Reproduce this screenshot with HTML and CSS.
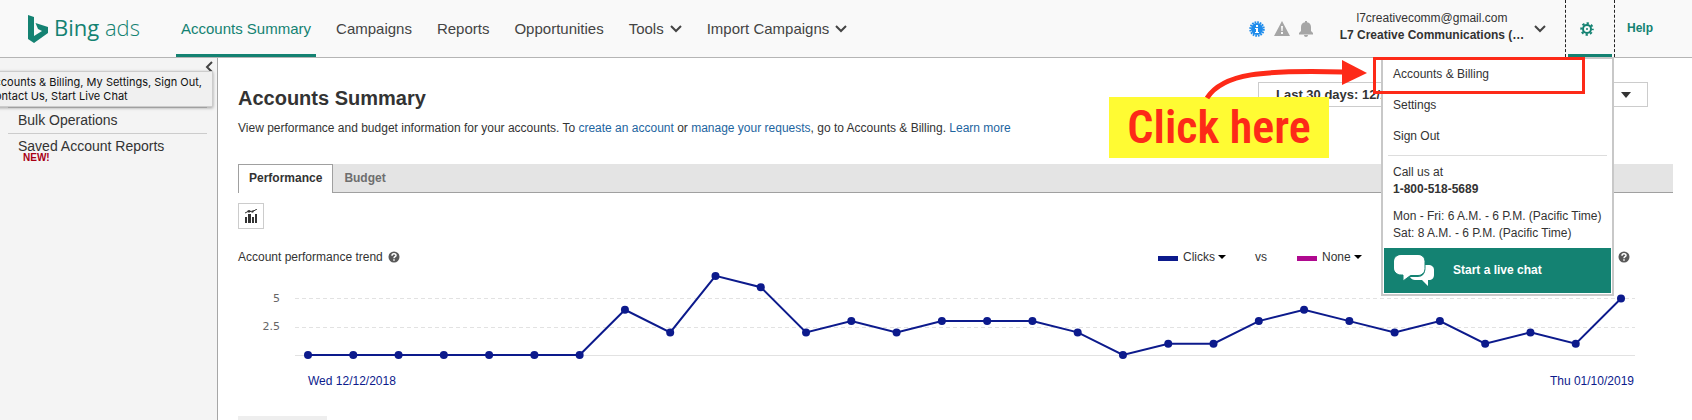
FILE: index.html
```html
<!DOCTYPE html>
<html lang="en">
<head>
    <meta charset="UTF-8">
    <meta name="viewport" content="width=device-width, initial-scale=1.0">
    <title>Accounts Summary - Bing ads</title>
    <link rel="stylesheet" href="styles.css">
</head>
<body>
    <header class="header">
        <a class="logo" href="#">
            <svg width="20" height="28" viewBox="0 0 20 28">
                <path fill="#148272" d="M0 0l6 2v19l8-5-4-2-2.500-6L20 12v6L6 28l-6-4z"/>
            </svg>
            <span class="logo-text">Bing <span class="logo-ads">ads</span></span>
        </a>
        <nav class="nav">
            <a class="nav-item active" href="#">Accounts Summary</a>
            <a class="nav-item" href="#">Campaigns</a>
            <a class="nav-item" href="#">Reports</a>
            <a class="nav-item" href="#">Opportunities</a>
            <a class="nav-item" href="#">Tools
                <svg class="chevron" width="12" height="8" viewBox="0 0 12 8"><path d="M1 1l5 5 5-5"/></svg>
            </a>
            <a class="nav-item" href="#">Import Campaigns
                <svg class="chevron" width="12" height="8" viewBox="0 0 12 8"><path d="M1 1l5 5 5-5"/></svg>
            </a>
        </nav>
        <div class="alerts">
            <svg width="16" height="16" viewBox="0 0 16 16">
                <circle cx="8" cy="8" r="6" fill="#1f8ceb"/>
                <circle cx="8" cy="8" r="6.750" fill="none" stroke="#1f8ceb" stroke-width="2" stroke-dasharray="1.700 .95"/>
                <path fill="#fff" d="M7 4h2v2H7zM6 7h3v4h1v1H6v-1h1V8H6z"/>
            </svg>
            <svg width="16" height="15" viewBox="0 0 16 15">
                <path fill="#a6a6a6" d="M8 0l8 15H0z"/>
                <path fill="#f9f9f9" d="M7 5h2l-.4 5H7.400zM7 11h2v2H7z"/>
            </svg>
            <svg width="14" height="16" viewBox="0 0 14 16">
                <path fill="#a6a6a6" d="M6 0h2v1.200c2.500.4 4 2.300 4 4.800v4l2 2v1.500H0V12l2-2V6c0-2.500 1.500-4.400 4-4.800zM5 14h4c0 1.200-.8 2-2 2s-2-.8-2-2z"/>
            </svg>
        </div>
        <button class="account" type="button">
            <span class="account-text">
                <span>l7creativecomm@gmail.com</span>
                <strong>L7 Creative Communications (…</strong>
            </span>
            <svg class="chevron" width="12" height="8" viewBox="0 0 12 8"><path d="M1 1l5 5 5-5"/></svg>
        </button>
        <div class="settings">
            <button class="settings-toggle" type="button" aria-label="Settings">
                <svg width="14" height="14" viewBox="0 0 14 14" fill="none" stroke="#148272">
                    <circle cx="7" cy="7" r="4" stroke-width="2"/>
                    <circle cx="7" cy="7" r="5.750" stroke-width="2" stroke-dasharray="2.300 2.216" stroke-dashoffset="1.100"/>
                    <circle cx="7" cy="7" r="1" fill="#148272" stroke="none"/>
                </svg>
            </button>
            <div class="menu">
                <a class="menu-item" href="#">Accounts &amp; Billing</a>
                <a class="menu-item" href="#">Settings</a>
                <a class="menu-item" href="#">Sign Out</a>
                <div class="menu-info">
                    <p>Call us at<br><strong>1-800-518-5689</strong></p>
                    <p>Mon - Fri: 6 A.M. - 6 P.M. (Pacific Time)<br>Sat: 8 A.M. - 6 P.M. (Pacific Time)</p>
                </div>
                <button class="chat" type="button">
                    <svg width="41" height="31" viewBox="0 0 41 31" fill="#fff">
                        <path d="M31 10h3c4 0 6 2 6 5v5c0 3-2 5-5 5h-1v6l-6-6h-7c-2 0-4-1-5-3h8c4 0 7-3 7-7z"/>
                        <path stroke="#148272" d="M7-.5h17c4 0 7 3 7 7v7c0 4-3 7-7 7h-7.500L9 26v-6H7c-4 0-7.500-3-7.500-7V6.500c0-4 3.500-7 7.500-7z"/>
                    </svg>
                    Start a live chat
                </button>
            </div>
        </div>
        <a class="help" href="#">Help</a>
    </header>

    <div class="page">
        <aside class="sidebar">
            <button class="collapse" type="button" aria-label="Collapse">
                <svg class="chevron" width="8" height="12" viewBox="0 0 8 12"><path d="M7 1L2 6l5 5"/></svg>
            </button>
            <ul class="side-list">
                <li><a href="#">Bulk Operations</a></li>
                <li><a href="#">Saved Account Reports</a><span class="new">NEW!</span></li>
            </ul>
            <div class="tooltip">Accounts &amp; Billing, My Settings, Sign Out,<br>Contact Us, Start Live Chat</div>
        </aside>

        <main class="main">
            <div class="title-row">
                <h1>Accounts Summary</h1>
                <button class="date-range" type="button">
                    <span>Last 30 days: 12/12/2018 - 1/10/2019</span>
                    <svg width="10" height="6" viewBox="0 0 10 6"><path fill="#333" d="M0 0h10L5 6z"/></svg>
                </button>
            </div>
            <p class="intro">View performance and budget information for your accounts. To <a href="#">create an account</a> or <a href="#">manage your requests</a>, go to Accounts &amp; Billing. <a href="#">Learn more</a></p>

            <div class="tabs" role="tablist">
                <button class="tab selected" type="button" role="tab" aria-selected="true">Performance</button>
                <button class="tab" type="button" role="tab" aria-selected="false">Budget</button>
            </div>

            <button class="chart-toggle" type="button" aria-label="Show chart">
                <svg width="13" height="14" viewBox="0 0 13 14">
                    <path fill="#333" d="M0 8h2v6H0zM3 5h3v9H3zM7 8h2v6H7zM10 5h2v9h-2z"/>
                    <path fill="none" stroke="#333" d="M0 4l4-2 3 1 5-3"/>
                    <path fill="#333" d="M2 2l2-1 2 1-2 2zM6 2l2 2 1-3z"/>
                </svg>
            </button>

            <div class="trend-row">
                <span>Account performance trend</span>
                <svg class="help-icon" width="12" height="12" viewBox="0 0 12 12">
                    <circle cx="6" cy="6" r="5.500" fill="#595959"/>
                    <path fill="none" stroke="#fff" stroke-width="1.500" d="M4 4.800c0-2.600 4-2.600 4-.3C8 5.800 6 5.600 6 7.300M6 8.300v1.400"/>
                </svg>
                <div class="legend">
                    <span class="swatch clicks"></span>
                    <select aria-label="First metric"><option>Clicks</option></select>
                    <svg width="8" height="4" viewBox="0 0 8 4"><path d="M0 0h8L4 4z"/></svg>
                    <span class="vs">vs</span>
                    <span class="swatch none"></span>
                    <select aria-label="Second metric"><option>None</option></select>
                    <svg width="8" height="4" viewBox="0 0 8 4"><path d="M0 0h8L4 4z"/></svg>
                </div>
                <svg width="12" height="12" viewBox="0 0 12 12">
                    <circle cx="6" cy="6" r="5.500" fill="#595959"/>
                    <path fill="none" stroke="#fff" stroke-width="1.500" d="M4 4.800c0-2.600 4-2.600 4-.3C8 5.800 6 5.600 6 7.300M6 8.300v1.400"/>
                </svg>
            </div>

            <div class="chart">
                <div class="axis"><span>5</span><span>2.5</span></div>
                <svg class="plot" id="plot" viewBox="0 0 1340 98">
                    <path class="grid" d="M0 31.500h1340M0 60.500h1340"/>
                    <path class="base" d="M0 88.500h1340"/>
                </svg>
            </div>
            <div class="dates"><span>Wed 12/12/2018</span><span>Thu 01/10/2019</span></div>
            <div class="toolbar"></div>
        </main>
    </div>

    <div class="callout">Click here</div>
    <svg class="arrow" width="164" height="42" viewBox="0 0 164 42">
        <path fill="none" stroke="#fd2a18" stroke-width="5" d="M4 40C20 15 60 12 140 14"/>
        <path fill="#fd2a18" d="M139 2l25 13-25 12z"/>
    </svg>
    <div class="highlight"></div>

    <script src="chart.js"></script>
</body>
</html>
```

FILE: styles.css
```css
:root {
    --teal: #148272;
    --text: #333;
    --navy: #0c1a8c;
    --red: #fd2a18;
}
* {
    box-sizing: border-box;
}
body {
    margin: 0;
    height: 100vh;
    overflow: hidden;
    position: relative;
    display: flex;
    flex-direction: column;
    font-family: "Liberation Sans", Arial, sans-serif;
    font-size: 12px;
    line-height: 17px;
    color: var(--text);
    background: #fff;
}
a {
    color: inherit;
    text-decoration: none;
}
button, select {
    font: inherit;
    color: inherit;
    padding: 0;
    border: none;
    background: none;
    cursor: pointer;
}
svg {
    display: block;
    flex: none;
}
.chevron {
    fill: none;
    stroke: #444;
    stroke-width: 2;
}

/* header */
.header {
    display: flex;
    align-items: center;
    flex: none;
    height: 58px;
    padding: 0 39px 0 28px;
    background: #f9f9f9;
    border-bottom: 1px solid #b5b5b5;
}
.logo {
    display: flex;
    align-items: center;
    gap: 6px;
    width: 148px;
    color: var(--teal);
}
.logo-text {
    padding-bottom: 3px;
    font-family: "Open Sans", sans-serif;
    font-size: 22px;
    line-height: 28px;
    white-space: nowrap;
}
.logo-ads {
    font-weight: 300;
}
.nav {
    display: flex;
    align-self: stretch;
    gap: 15px;
    font-size: 15px;
    color: #444;
    white-space: nowrap;
}
.nav-item {
    display: flex;
    align-items: center;
    gap: 6px;
    padding: 0 5px;
    border-top: 3px solid transparent;
    border-bottom: 3px solid transparent;
}
.nav-item.active {
    color: var(--teal);
    border-bottom-color: var(--teal);
}
.alerts {
    display: flex;
    align-items: center;
    gap: 9px;
    margin-left: auto;
}
.account {
    display: flex;
    align-items: center;
    gap: 10px;
    margin: 0 19px 0 27px;
    white-space: nowrap;
}
.account-text {
    display: flex;
    flex-direction: column;
    align-items: center;
    width: 184px;
    padding-top: 3px;
    padding-bottom: 7px;
}
.settings {
    position: relative;
    align-self: stretch;
    width: 50px;
    padding: 0 2px;
    border: dashed #222;
    border-width: 0 1px;
}
.settings-toggle {
    display: flex;
    align-items: center;
    justify-content: center;
    width: 100%;
    height: 100%;
    padding-right: 6px;
    border-top: 3px solid transparent;
    border-bottom: 3px solid var(--teal);
}
.help {
    margin-left: 12px;
    font-weight: bold;
    color: var(--teal);
}

/* settings menu */
.menu {
    position: absolute;
    top: 57px;
    right: 0;
    z-index: 5;
    width: 233px;
    padding: 0 1px 1px;
    background: #fff;
    border: 2px solid #c8c8c8;
}
.menu-item {
    display: block;
    padding: 0 9px;
    line-height: 31px;
}
.menu-info {
    margin: 3px 4px 0;
    padding: 8px 5px 6px;
    border-top: 1px solid #ddd;
    white-space: nowrap;
}
.menu-info p {
    margin: 0 0 10px;
}
.menu-info p:last-child {
    margin: 0;
}
.chat {
    display: flex;
    align-items: center;
    gap: 18px;
    width: 100%;
    height: 45px;
    padding: 0 10px;
    font-weight: bold;
    color: #fff;
    background: var(--teal);
}

/* left pane */
.page {
    display: flex;
    flex: 1;
    min-height: 0;
}
.sidebar {
    position: relative;
    flex: none;
    width: 218px;
    padding: 3px 10px 0 8px;
    background: #f4f4f4;
    border-right: 1px solid #a6a6a6;
}
.collapse {
    display: block;
    margin: 0 -6px 0 auto;
}
.side-list {
    margin: 34px 0 0;
    padding: 0;
    list-style: none;
}
.side-list li {
    padding: 3px 10px 4px;
    font-size: 14px;
    line-height: 18px;
    border-top: 1px solid #ccc;
}
.new {
    display: block;
    margin: -2px 0 0 5px;
    font-size: 10px;
    line-height: 10px;
    font-weight: bold;
    color: #a80014;
}
.tooltip {
    position: absolute;
    top: 13px;
    right: 4px;
    padding: 3px 10px;
    font-family: Inter, sans-serif;
    font-size: 11px;
    line-height: 14px;
    white-space: nowrap;
    color: #111;
    background: #f0f0f0;
    border: 1px solid #ccc;
    box-shadow: 0 1px 3px rgba(0, 0, 0, 0.35);
}

/* content */
.main {
    flex: 1;
    min-width: 0;
    padding: 24px 19px 0 20px;
}
.title-row {
    display: flex;
    align-items: flex-start;
    justify-content: space-between;
    padding-right: 25px;
}
h1 {
    margin: 4px 0 0;
    font-size: 20px;
    line-height: 24px;
}
.date-range {
    display: flex;
    align-items: center;
    justify-content: space-between;
    width: 390px;
    height: 25px;
    padding: 0 16px 0 17px;
    font-size: 13px;
    font-weight: bold;
    border: 1px solid #ccc;
}
.intro {
    margin: 10px 0 28px;
    line-height: 16px;
}
.intro a {
    color: #1d65a0;
}
.tabs {
    display: flex;
    height: 29px;
    background: #e4e4e4;
    box-shadow: inset 0 -1px #a0a0a0;
}
.tab {
    padding: 0 11px;
    font-weight: bold;
    color: #6e6e6e;
}
.tab.selected {
    padding: 0 10px 1px;
    color: var(--text);
    background: #fff;
    border: 1px solid #a0a0a0;
    border-bottom: none;
}
.chart-toggle {
    display: flex;
    align-items: center;
    justify-content: center;
    width: 26px;
    height: 26px;
    margin: 10px 0 18px;
    border: 1px solid #ccc;
}
.trend-row {
    display: flex;
    align-items: center;
    height: 20px;
    padding-right: 43px;
}
.help-icon {
    margin-left: 5px;
}
.legend {
    display: flex;
    align-items: center;
    margin: 0 256px 0 auto;
}
.legend select {
    appearance: none;
    margin: 0 3px 0 5px;
}
.swatch {
    width: 20px;
    height: 5px;
    margin-top: 3px;
}
.swatch.clicks {
    background: var(--navy);
}
.swatch.none {
    background: #b0098f;
}
.vs {
    margin: 0 30px 0 29px;
}
.chart {
    display: flex;
    padding-right: 38px;
}
.axis {
    display: flex;
    flex-direction: column;
    flex: none;
    width: 57px;
    padding: 18px 15px 0 0;
    font-family: "DejaVu Sans", sans-serif;
    font-size: 11px;
    line-height: 28px;
    text-align: right;
    color: #666;
}
.plot {
    flex: 1;
    min-width: 0;
}
.grid, .base {
    fill: none;
    stroke: #e2e2e2;
}
.grid {
    stroke-dasharray: 4 3;
}
.series {
    fill: none;
    stroke: var(--navy);
    stroke-width: 2;
}
.point {
    fill: var(--navy);
}
.dates {
    display: flex;
    justify-content: space-between;
    padding: 8px 39px 0 70px;
    line-height: 17px;
    color: var(--navy);
}
.toolbar {
    width: 89px;
    height: 24px;
    margin-top: 26px;
    background: #eee;
}

/* annotation */
.callout {
    position: absolute;
    top: 97px;
    right: 363px;
    z-index: 6;
    width: 220px;
    font-family: "Roboto Condensed", Roboto, "Liberation Sans", sans-serif;
    font-size: 46px;
    font-weight: 600;
    line-height: 61px;
    text-align: center;
    color: var(--red);
    background: #fffb33;
}
.arrow {
    position: absolute;
    top: 58px;
    right: 325px;
    z-index: 7;
}
.highlight {
    position: absolute;
    top: 57px;
    right: 107px;
    z-index: 7;
    width: 212px;
    height: 37px;
    border: 3px solid var(--red);
    pointer-events: none;
}
```

FILE: chart.js
```js
const clicks = [0, 0, 0, 0, 0, 0, 0, 4, 2, 7, 6, 2, 3, 2, 3, 3, 3, 2, 0, 1, 1, 3, 4, 3, 2, 3, 1, 2, 1, 5];
const plot = document.getElementById('plot');

function addShape(name, attrs) {
    const shape = document.createElementNS('http://www.w3.org/2000/svg', name);
    for (const key in attrs) shape.setAttribute(key, attrs[key]);
    plot.appendChild(shape);
}

// first day at 13, last day at 1326, one click is 11.3 units high
const points = clicks.map((value, i) => [
    13 + i * 1313 / (clicks.length - 1),
    88 - value * 11.3
]);

addShape('polyline', { class: 'series', points: points.join(' ') });
points.forEach(([x, y]) => addShape('circle', { class: 'point', cx: x, cy: y, r: 4 }));
```
